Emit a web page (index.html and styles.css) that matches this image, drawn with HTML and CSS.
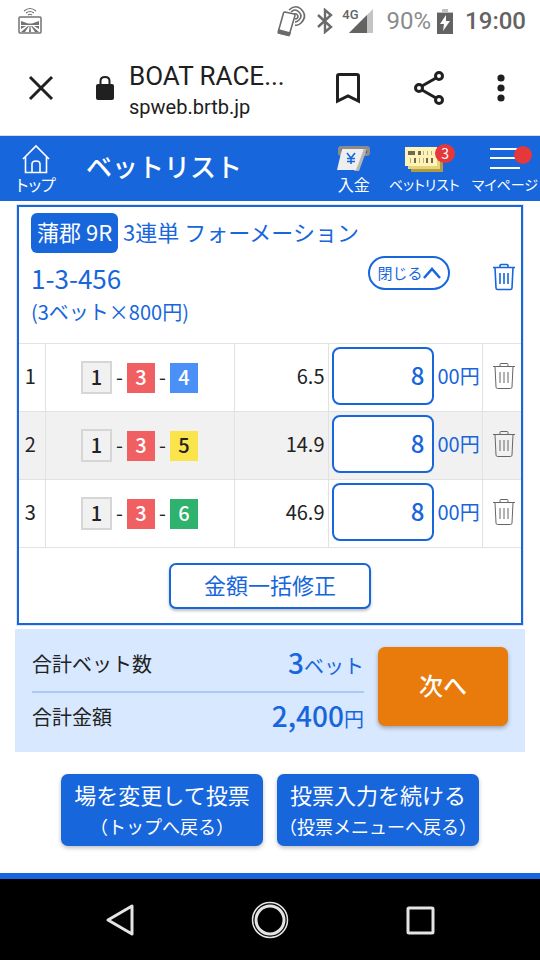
FILE: index.html
```html
<!DOCTYPE html>
<html lang="ja">
<head>
	<meta charset="UTF-8">
	<meta name="viewport" content="width=device-width, initial-scale=1">
	<title>ベットリスト</title>
	<link rel="stylesheet" href="styles.css">
</head>
<body>
	<svg class="defs" width="0" height="0" aria-hidden="true">
		<symbol id="trash" viewBox="0 0 24 28">
			<path d="M1 4.500H23M8 4V2.500Q8 1.500 9 1.500H15Q16 1.500 16 2.500V4M3 4.500L4 25Q4.100 26.500 5.500 26.500H18.500Q19.900 26.500 20 25L21 4.500M8 10V21M12 10V21M16 10V21" fill="none" stroke="currentColor"/>
		</symbol>
	</svg>

	<div class="status-bar">
		<svg class="cast" width="26" height="28" viewBox="0 0 26 28" fill="none" stroke="#737373">
			<path d="M7 4Q13 -1 19 4M9 6Q13 3 17 6M11 8Q13 6.500 15 8" stroke-width="1.200"/>
			<rect x="2" y="10" width="22" height="16" rx="1" stroke-width="1.500"/>
			<path d="M4 14L11 16.500H15L22 14V18H4ZM4 19H9L4 22ZM22 19H17L22 22ZM11 19L4 25H8L12 19ZM15 19L22 25H18L14 19ZM12.500 19H13.500L14 25H12Z" fill="#737373" stroke="none"/>
		</svg>
		<div class="status-right">
			<svg width="32" height="32" viewBox="0 0 32 32" fill="none" stroke="#6b6b6b" stroke-width="1.600">
				<path d="M9 7L18 9Q19 9 19 10.500L13.500 29Q13 30 12 30L3 28Q2 27.500 2.300 26.500L7.500 8Q8 7 9 7Z"/>
				<path d="M3 25L14 28L13 30.500L2.500 28Z" fill="#6b6b6b"/>
				<path d="M13 5Q19 -1 25 4Q32 11 25 18Q22 21 19 20M15 7Q19 3 23 7Q27 11 23 15Q21 17 19 17M18 9Q21 8 22 11Q22 14 19 14"/>
			</svg>
			<svg width="18" height="26" viewBox="0 0 18 26" fill="none" stroke="#6b6b6b" stroke-width="2.400">
				<path d="M2 7L15 19L9 24V2L15 7L2 19"/>
			</svg>
			<div class="signal">
				<span class="signal-label">4G</span>
				<svg width="24" height="24" viewBox="0 0 24 24">
					<path d="M0 24L24 0V24Z" fill="#c4c4c4"/>
					<path d="M0 24L18 6V24Z" fill="#636363"/>
				</svg>
			</div>
			<span class="percent">90%</span>
			<svg width="16" height="25" viewBox="0 0 16 25">
				<path d="M5 0H11V3H16V7H0V3H5Z" fill="#c0c0c0"/>
				<path d="M0 4H16V25H0Z" fill="#636363"/>
				<path d="M9 6L3 15H7L6 22L13 12H9Z" fill="#fff"/>
			</svg>
			<span class="clock">19:00</span>
		</div>
	</div>

	<div class="browser-bar">
		<button class="icon-button close" type="button" aria-label="閉じる">
			<svg width="26" height="26" viewBox="0 0 26 26" fill="none" stroke="#202020" stroke-width="3"><path d="M2 2L24 24M24 2L2 24"/></svg>
		</button>
		<svg class="lock" width="20" height="26" viewBox="0 0 20 26">
			<rect x="1" y="9" width="18" height="16" rx="2" fill="#202020"/>
			<path d="M5.500 10V6Q5.500 2 10 2Q14.500 2 14.500 6V10" fill="none" stroke="#202020" stroke-width="2"/>
		</svg>
		<div class="page-info">
			<div class="page-title">BOAT RACE...</div>
			<div class="page-url">spweb.brtb.jp</div>
		</div>
		<div class="browser-icons">
			<button class="icon-button" type="button" aria-label="ブックマーク">
				<svg width="26" height="32" viewBox="0 0 26 32" fill="none" stroke="#202020" stroke-width="3"><path d="M2.500 29V4Q2.500 2.500 4 2.500H22Q23.500 2.500 23.500 4V29L13 24Z"/></svg>
			</button>
			<button class="icon-button" type="button" aria-label="共有">
				<svg width="32" height="36" viewBox="0 0 32 36" fill="none" stroke="#202020" stroke-width="3"><path d="M9 16L23 8M9 20L23 28"/><circle cx="6" cy="18" r="3.500"/><circle cx="26" cy="6" r="3.500"/><circle cx="26" cy="30" r="3.500"/></svg>
			</button>
			<button class="icon-button" type="button" aria-label="メニュー">
				<svg width="8" height="28" viewBox="0 0 8 28" fill="#202020"><circle cx="4" cy="4" r="3.600"/><circle cx="4" cy="14" r="3.600"/><circle cx="4" cy="24" r="3.600"/></svg>
			</button>
		</div>
	</div>

	<header class="header">
		<a class="nav-link home" href="#">
			<svg width="28" height="30" viewBox="0 0 28 30" fill="none" stroke="#fff" stroke-width="1.600"><path d="M1 15L14 2L27 15M3.500 13V28.500H24.500V13M10 28V20Q10 17 14 17Q18 17 18 20V28"/></svg>
			<span>トップ</span>
		</a>
		<h1 class="title">ベットリスト</h1>
		<nav class="header-nav">
			<a class="nav-link deposit" href="#">
				<svg width="34" height="30" viewBox="0 0 34 30">
					<rect x="1" y="2" width="32" height="10" rx="3" fill="#8c8c8c"/>
					<rect x="4" y="5" width="26" height="4" fill="#555"/>
					<path d="M27 5H30L22 27H17Z" fill="#b5b5b5"/>
					<path d="M5 5H27L19 26H0Z" fill="#eee"/>
					<path d="M10 9L14 14L18 9M14 14V20M10 14.500H18M10 17.500H18" fill="none" stroke="#1766dc" stroke-width="1.600"/>
				</svg>
				<span>入金</span>
			</a>
			<a class="nav-link" href="#">
				<span class="icon-wrap">
					<svg width="38" height="30" viewBox="0 0 38 30">
						<path d="M6 8H38V28H6Z" fill="#b39b45"/>
						<path d="M3 6H35V25H3Z" fill="#e6d47a"/>
						<path d="M0 3H32V22H0Z" fill="#fff3b8"/>
						<path d="M3 7H10V11H3ZM13 7H16V11H13ZM9 14H11V19H9ZM21 14H23V19H21ZM26 14H28V19H26Z" fill="#6e6954"/>
						<path d="M18 7H19V11H18ZM22 7H23V11H22ZM26 7H27V11H26ZM5 14H6V19H5ZM14 14H15V19H14ZM18 14H19V19H18Z" fill="#bcae77"/>
					</svg>
					<span class="count">3</span>
				</span>
				<span>ベットリスト</span>
			</a>
			<a class="nav-link" href="#">
				<span class="icon-wrap">
					<svg width="30" height="30" viewBox="0 0 30 30" stroke="#fff" stroke-width="2"><path d="M0 5H30M0 14H30M0 24H30"/></svg>
					<span class="dot"></span>
				</span>
				<span>マイページ</span>
			</a>
		</nav>
	</header>

	<main class="main">
		<section class="bet">
			<div class="bet-head">
				<div class="bet-type"><span class="race">蒲郡 9R</span><span>3連単 フォーメーション</span></div>
				<div class="bet-detail">
					<div>
						<div class="combo">1-3-456</div>
						<div class="bet-sum">(3ベット×800円)</div>
					</div>
					<button class="fold" type="button">閉じる<svg width="18" height="12" viewBox="0 0 18 12" fill="none" stroke="currentColor" stroke-width="2.500"><path d="M1 11L9 2L17 11"/></svg></button>
					<button class="icon-button delete-all" type="button" aria-label="全て削除"><svg width="24" height="28"><use href="#trash"/></svg></button>
				</div>
			</div>
			<table class="bets">
				<colgroup><col class="col-no"><col><col class="col-odds"><col class="col-amount"><col class="col-delete"></colgroup>
				<tr>
					<td class="no">1</td>
					<td><div class="boats"><b class="boat b1">1</b><i>-</i><b class="boat b3">3</b><i>-</i><b class="boat b4">4</b></div></td>
					<td class="odds">6.5</td>
					<td><div class="amount"><input id="amount1" type="text" inputmode="numeric" value="8"><label for="amount1">00円</label></div></td>
					<td><button class="icon-button" type="button" aria-label="削除"><svg width="24" height="28"><use href="#trash"/></svg></button></td>
				</tr>
				<tr>
					<td class="no">2</td>
					<td><div class="boats"><b class="boat b1">1</b><i>-</i><b class="boat b3">3</b><i>-</i><b class="boat b5">5</b></div></td>
					<td class="odds">14.9</td>
					<td><div class="amount"><input id="amount2" type="text" inputmode="numeric" value="8"><label for="amount2">00円</label></div></td>
					<td><button class="icon-button" type="button" aria-label="削除"><svg width="24" height="28"><use href="#trash"/></svg></button></td>
				</tr>
				<tr>
					<td class="no">3</td>
					<td><div class="boats"><b class="boat b1">1</b><i>-</i><b class="boat b3">3</b><i>-</i><b class="boat b6">6</b></div></td>
					<td class="odds">46.9</td>
					<td><div class="amount"><input id="amount3" type="text" inputmode="numeric" value="8"><label for="amount3">00円</label></div></td>
					<td><button class="icon-button" type="button" aria-label="削除"><svg width="24" height="28"><use href="#trash"/></svg></button></td>
				</tr>
			</table>
			<button class="fix" type="button">金額一括修正</button>
		</section>

		<section class="summary">
			<dl class="totals">
				<div><dt>合計ベット数</dt><dd><strong>3</strong>ベット</dd></div>
				<div><dt>合計金額</dt><dd><strong>2,400</strong>円</dd></div>
			</dl>
			<button class="next" type="button">次へ</button>
		</section>

		<div class="actions">
			<button class="action" type="button">場を変更して投票<small>（トップへ戻る）</small></button>
			<button class="action" type="button">投票入力を続ける<small>（投票メニューへ戻る）</small></button>
		</div>
	</main>

	<footer class="android-nav">
		<button class="icon-button" type="button" aria-label="戻る"><svg width="30" height="36" viewBox="0 0 30 36" fill="none" stroke="#e4e4e4" stroke-width="3" stroke-linejoin="round"><path d="M3 18L27 4V32Z"/></svg></button>
		<button class="icon-button" type="button" aria-label="ホーム"><svg width="38" height="38" viewBox="0 0 38 38" fill="none" stroke="#e4e4e4"><circle cx="19" cy="19" r="17.500" stroke-width="1.500"/><circle cx="19" cy="19" r="14" stroke-width="3"/></svg></button>
		<button class="icon-button" type="button" aria-label="履歴"><svg width="30" height="30" viewBox="0 0 30 30" fill="none" stroke="#e4e4e4" stroke-width="3"><rect x="3" y="3" width="25" height="25" rx="1"/></svg></button>
	</footer>
</body>
</html>
```
FILE: styles.css
```css
* {
	box-sizing: border-box;
}
body {
	margin: 0;
	min-height: 100vh;
	display: flex;
	flex-direction: column;
	background-color: #fff;
	color: #222;
	font-family: "Noto Sans CJK JP", sans-serif;
	font-size: 20px;
	line-height: 30px;
}
button, input {
	font: inherit;
	color: inherit;
}
button {
	cursor: pointer;
}
svg {
	display: block;
	flex-shrink: 0;
}
.defs {
	position: absolute;
}
.icon-button {
	display: block;
	padding: 0;
	border: none;
	background: none;
}

/* status bar */
.status-bar {
	display: flex;
	justify-content: space-between;
	align-items: center;
	height: 42px;
	padding: 0 14px 0 17px;
	font-family: Roboto, sans-serif;
	color: #636363;
}
.status-right {
	display: flex;
	align-items: center;
	font-size: 24px;
}
.status-right > svg {
	margin-right: 8px;
}
.signal {
	display: flex;
	align-items: center;
	margin-right: 14px;
}
.signal-label {
	align-self: flex-start;
	margin-right: -10px;
	font-size: 13px;
	font-weight: 500;
	line-height: 12px;
}
.percent {
	margin-right: 6px;
	color: #8b8b8b;
}
.clock {
	margin-left: 4px;
	font-weight: 500;
}

/* browser bar */
.browser-bar {
	display: flex;
	align-items: center;
	height: 94px;
	padding: 0 35px 2px 28px;
	border-bottom: 1px solid #dcdcdc;
	font-family: Roboto, sans-serif;
	color: #202020;
}
.lock {
	margin: 0 14px 0 41px;
}
.page-title {
	padding-top: 4px;
	font-size: 26px;
	line-height: 34px;
}
.page-url {
	line-height: 28px;
}
.browser-icons {
	display: flex;
	flex: 1;
	justify-content: flex-end;
	align-items: center;
	gap: 52px;
}

/* header */
.header {
	display: flex;
	height: 65px;
	padding: 8px 2px 0 0;
	background-color: #1766dc;
	color: #fff;
}
.nav-link {
	display: flex;
	flex-direction: column;
	align-items: center;
	color: #fff;
	font-size: 14px;
	line-height: 20px;
	text-decoration: none;
	font-feature-settings: "palt";
	white-space: nowrap;
}
.home, .deposit {
	font-size: 16px;
}
.home {
	width: 72px;
}
.title {
	margin: 0 0 0 14px;
	font-size: 26px;
	font-weight: 500;
	line-height: 44px;
}
.header-nav {
	display: flex;
	gap: 12px;
	margin-left: auto;
}
.deposit {
	margin-right: 6px;
}
.icon-wrap {
	position: relative;
}
.count, .dot {
	position: absolute;
	border-radius: 50%;
	background-color: #e5383b;
}
.count {
	top: 0;
	right: -12px;
	width: 20px;
	height: 19px;
	font-size: 14px;
	line-height: 18px;
	text-align: center;
}
.dot {
	top: 2px;
	right: -12px;
	width: 18px;
	height: 18px;
}

/* bet list */
.main {
	flex: 1;
	padding: 4px 15px 0;
}
.bet {
	margin: 0 2px;
	border: 2px solid #1766dc;
	outline: 1px solid #dde6f2;
	padding-bottom: 14px;
}
.bet-head {
	height: 136px;
	padding: 6px 5px 0 12px;
	color: #1766dc;
}
.bet-type {
	display: flex;
	gap: 5px;
	font-size: 22px;
	line-height: 36px;
}
.race {
	height: 40px;
	padding: 0 6px;
	border-radius: 6px;
	background-color: #1766dc;
	color: #fff;
}
.bet-detail {
	display: flex;
	align-items: flex-start;
}
.combo {
	margin-top: 6px;
	font-size: 26px;
	line-height: 38px;
}
.fold {
	display: flex;
	justify-content: center;
	align-items: center;
	width: 82px;
	height: 34px;
	margin: 3px 42px 0 auto;
	padding: 0;
	border: 2px solid #1766dc;
	border-radius: 17px;
	background-color: #fff;
	font-size: 15px;
}
.delete-all {
	margin-top: 10px;
	stroke-width: 1.6;
}
.bets {
	width: 100%;
	border-collapse: collapse;
	table-layout: fixed;
}
.col-no {
	width: 26px;
}
.col-odds {
	width: 94px;
}
.col-amount {
	width: 154px;
}
.col-delete {
	width: 39px;
}
.bets td {
	height: 68px;
	padding: 0 0 3px;
	border: 1px solid #e2e2e2;
}
.bets tr:nth-child(even) {
	background-color: #f1f1f1;
}
.bets td:first-child {
	border-left: none;
}
.bets td:last-child {
	border-right: none;
	color: #666;
}
.bets .icon-button {
	margin: 0 5px 0 auto;
}
.bets .no {
	padding-right: 3px;
	text-align: center;
}
.bets .odds {
	padding-right: 3px;
	text-align: right;
}
.boats {
	display: flex;
	justify-content: center;
	align-items: center;
	padding-top: 3px;
}
.boats i {
	width: 15px;
	padding-bottom: 2px;
	font-style: normal;
	text-align: center;
}
.boat {
	width: 28px;
	height: 30px;
	font-weight: 500;
	line-height: 28px;
	text-align: center;
	color: #fff;
}
.b1 {
	width: 31px;
	height: 33px;
	border: 2px solid #d6d6d6;
	background-color: #f1f1f1;
	color: #222;
}
.b3 {
	background-color: #f06062;
}
.b4 {
	background-color: #4a90f7;
}
.b5 {
	background-color: #fae34b;
	color: #222;
}
.b6 {
	background-color: #2eb26d;
}
.amount {
	display: flex;
	align-items: center;
	gap: 4px;
	padding-left: 3px;
	color: #1766dc;
	white-space: nowrap;
}
.amount input {
	width: 102px;
	height: 58px;
	padding: 0 7px 4px;
	border: 2px solid #1766dc;
	border-radius: 8px;
	background-color: #fff;
	font-size: 24px;
	font-weight: 500;
	text-align: right;
}
.fix {
	display: block;
	width: 202px;
	height: 46px;
	margin: 15px auto 0;
	padding: 0 0 4px;
	border: 2px solid #1766dc;
	border-radius: 7px;
	background-color: #fff;
	box-shadow: 0 2px 3px rgba(0, 0, 0, 0.25);
	color: #1766dc;
	font-size: 22px;
}

/* totals */
.summary {
	display: flex;
	align-items: center;
	gap: 14px;
	height: 123px;
	margin-top: 4px;
	padding: 0 17px;
	background-color: #d8e8ff;
}
.totals {
	flex: 1;
	margin: 0;
}
.totals div {
	display: flex;
	justify-content: space-between;
	align-items: center;
	height: 52px;
	padding-bottom: 2px;
}
.totals div + div {
	border-top: 2px solid #a9caf7;
}
.totals dd {
	margin: 0;
	color: #1766dc;
}
.totals strong {
	font-size: 28px;
	font-weight: 500;
}
.next {
	width: 130px;
	height: 79px;
	margin-bottom: 8px;
	padding: 0 0 4px;
	border: none;
	border-radius: 7px;
	background-color: #e87b0c;
	box-shadow: 0 2px 4px rgba(0, 0, 0, 0.3);
	color: #fff;
	font-size: 24px;
	font-weight: 500;
}
.actions {
	display: flex;
	justify-content: center;
	gap: 14px;
	padding: 22px 0 27px;
}
.action {
	width: 202px;
	height: 72px;
	padding: 0 0 2px;
	border: none;
	border-radius: 7px;
	background-color: #1766dc;
	box-shadow: 0 2px 4px rgba(0, 0, 0, 0.25);
	color: #fff;
	font-size: 22px;
	line-height: 34px;
}
.action small {
	display: block;
	font-size: 18px;
	line-height: 30px;
}

/* bottom bar */
.android-nav {
	display: flex;
	justify-content: center;
	align-items: center;
	gap: 116px;
	height: 87px;
	border-top: 6px solid #1766dc;
	background-color: #000;
}
```
